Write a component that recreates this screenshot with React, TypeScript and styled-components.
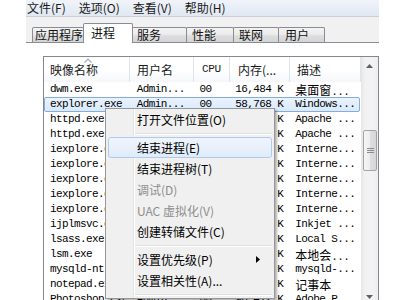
import React from "react";
import styled, { createGlobalStyle } from "styled-components";

const GlobalStyle = createGlobalStyle`
  html, body { margin: 0; padding: 0; width: 400px; height: 300px; overflow: hidden; background: #fff; }
  body { font-family: "Noto Sans CJK SC", "Noto Sans", sans-serif; }
`;

const Page = styled.div`
  position: relative;
  width: 400px;
  height: 300px;
  overflow: hidden;
  background: #fff;
`;

const Window = styled.div`
  margin-left: 26px;
  width: 353px;
  display: flex;
  flex-direction: column;
`;

const MenuBar = styled.div`
  height: 16px;
  display: flex;
  align-items: center;
  gap: 13px;
  padding-left: 1px;
  background: linear-gradient(#f0f4fa, #e1e8f2);
  border-bottom: 1px solid #c8cfda;
  font-size: 12px;
  line-height: 16px;
  color: #1a1a1a;
`;

const MenuItem = styled.span`
  white-space: nowrap;
`;

const TabStrip = styled.div`
  height: 25px;
  background: #f1f1f1;
  border-bottom: 1px solid #898c95;
  display: flex;
  align-items: flex-end;
  padding-left: 6px;
`;

const Tab = styled.div<{ $w: number; $pl: number; $active?: boolean }>`
  position: relative;
  z-index: ${(p) => (p.$active ? 2 : 1)};
  box-sizing: border-box;
  width: ${(p) => p.$w}px;
  height: ${(p) => (p.$active ? 20 : 15)}px;
  margin-left: -1px;
  margin-bottom: ${(p) => (p.$active ? -1 : 0)}px;
  &:first-child { margin-left: 0; }
  border: 1px solid #898c95;
  border-bottom: none;
  border-radius: 2px 2px 0 0;
  background: ${(p) =>
    p.$active ? "#fff" : "linear-gradient(#f3f3f3, #ececec 45%, #dedede 55%, #d4d4d4)"};
  padding-left: ${(p) => p.$pl}px;
  font-size: 12px;
  line-height: ${(p) => (p.$active ? 18 : 14)}px;
  color: #111;
  white-space: nowrap;
`;

const TabPage = styled.div`
  background: #fff;
  padding: 13px 0 0 17px;
`;

const ListBox = styled.div`
  width: 336px;
  height: 250px;
  box-sizing: border-box;
  border: 1px solid #828790;
  display: flex;
  background: #fff;
`;

const ListContent = styled.div`
  width: 317px;
  overflow: hidden;
  display: flex;
  flex-direction: column;
`;

const Header = styled.div`
  height: 25px;
  display: flex;
  background: linear-gradient(#ffffff, #ffffff 50%, #f5f7fa);
  flex-shrink: 0;
`;

const HeaderCell = styled.div<{ $w: number; $pl: number; $mono?: boolean }>`
  position: relative;
  box-sizing: border-box;
  width: ${(p) => p.$w}px;
  padding-left: ${(p) => p.$pl}px;
  border-right: 1px solid #dfe4eb;
  font-family: ${(p) =>
    p.$mono ? `"Liberation Mono", monospace` : `"Noto Sans CJK SC", sans-serif`};
  font-size: ${(p) => (p.$mono ? 11 : 12)}px;
  letter-spacing: ${(p) => (p.$mono ? "-0.4px" : "0")};
  line-height: 25px;
  color: #1b1b1b;
  white-space: nowrap;
  overflow: hidden;
`;

const SortArrow = styled.svg`
  position: absolute;
  top: 1px;
  left: 40px;
`;

const Row = styled.div<{ $selected?: boolean }>`
  box-sizing: border-box;
  height: 15px;
  width: 316px;
  display: flex;
  border: 1px solid ${(p) => (p.$selected ? "#84acdd" : "transparent")};
  border-radius: 2px;
  background: ${(p) => (p.$selected ? "linear-gradient(#eaf3fd, #d9e9fc)" : "transparent")};
  flex-shrink: 0;
`;

const Cell = styled.div<{ $w: number; $pl?: number; $pr?: number; $right?: boolean }>`
  box-sizing: border-box;
  width: ${(p) => p.$w}px;
  padding-left: ${(p) => p.$pl ?? 0}px;
  padding-right: ${(p) => p.$pr ?? 0}px;
  text-align: ${(p) => (p.$right ? "right" : "left")};
  font-family: "Liberation Mono", "DejaVu Sans Mono", monospace;
  font-size: 11px;
  letter-spacing: -0.6px;
  line-height: 13px;
  color: #000;
  white-space: pre;
  overflow: hidden;
`;

const Cjk = styled.span`
  font-family: "Noto Sans CJK SC", sans-serif;
  font-size: 12px;
  letter-spacing: 0;
`;

const ScrollBar = styled.div`
  width: 17px;
  display: flex;
  flex-direction: column;
  background: linear-gradient(to right, #e6e6e6, #f2f2f2 25%, #f2f2f2 75%, #ededed);
`;

const ScrollButton = styled.div`
  height: 17px;
  display: flex;
  align-items: center;
  justify-content: center;
  flex-shrink: 0;
`;

const Track = styled.div`
  flex: 1;
  padding-top: 56px;
`;

const Thumb = styled.div`
  box-sizing: border-box;
  height: 41px;
  margin: 0 1px 0 2px;
  border: 1px solid #a3a3a3;
  border-radius: 2px;
  background: linear-gradient(to right, #f6f6f6, #ececec 50%, #dedede 50%, #d6d6d6);
  display: flex;
  align-items: center;
  justify-content: center;
`;

const ContextMenu = styled.div`
  position: absolute;
  left: 105px;
  top: 108px;
  width: 170px;
  box-sizing: border-box;
  border: 1px solid #979797;
  background: #f0f0f0;
  box-shadow: 2px 2px 2px rgba(0, 0, 0, 0.3);
  padding: 0 2px;
  font-family: "Noto Sans CJK SC", sans-serif;
  font-size: 12px;
  z-index: 10;
  &::before {
    content: "";
    position: absolute;
    left: 27px;
    top: 0;
    bottom: 0;
    width: 1px;
    background: #e2e3e3;
    border-right: 1px solid #ffffff;
  }
`;

const CtxItem = styled.div<{ $hover?: boolean; $disabled?: boolean }>`
  position: relative;
  box-sizing: border-box;
  height: 21px;
  padding-left: 28px;
  border: 1px solid ${(p) => (p.$hover ? "#aecbee" : "transparent")};
  border-radius: 3px;
  background: ${(p) => (p.$hover ? "linear-gradient(#f0f5fc, #e0ebfa)" : "transparent")};
  line-height: 19px;
  color: ${(p) => (p.$disabled ? "#8d8d8d" : "#000")};
  white-space: nowrap;
  display: flex;
  align-items: center;
  justify-content: space-between;
`;

const SubArrow = styled.svg`
  margin-right: 11px;
`;

const CtxSep = styled.div`
  height: 7px;
  display: flex;
  align-items: center;
  padding-left: 25px;
  &::after {
    content: "";
    flex: 1;
    height: 1px;
    background: #e0e0e0;
    border-bottom: 1px solid #ffffff;
  }
`;

type Proc = { name: string; user: string; cpu: string; mem: string; desc: React.ReactNode };

const procs: Proc[] = [
  { name: "dwm.exe", user: "Admin...", cpu: "00", mem: "16,484 K", desc: <><Cjk>桌面窗</Cjk>...</> },
  { name: "explorer.exe", user: "Admin...", cpu: "00", mem: "58,768 K", desc: "Windows..." },
  { name: "httpd.exe", user: "Admin...", cpu: "00", mem: "9,112 K", desc: "Apache ..." },
  { name: "httpd.exe", user: "Admin...", cpu: "00", mem: "12,904 K", desc: "Apache ..." },
  { name: "iexplore.exe", user: "Admin...", cpu: "00", mem: "21,360 K", desc: "Interne..." },
  { name: "iexplore.exe", user: "Admin...", cpu: "00", mem: "33,020 K", desc: "Interne..." },
  { name: "iexplore.exe", user: "Admin...", cpu: "00", mem: "18,744 K", desc: "Interne..." },
  { name: "iexplore.exe", user: "Admin...", cpu: "00", mem: "27,516 K", desc: "Interne..." },
  { name: "iexplore.exe", user: "Admin...", cpu: "00", mem: "40,128 K", desc: "Interne..." },
  { name: "ijplmsvc.exe", user: "SYSTEM", cpu: "00", mem: "1,036 K", desc: "Inkjet ..." },
  { name: "lsass.exe", user: "SYSTEM", cpu: "00", mem: "3,872 K", desc: "Local S..." },
  { name: "lsm.exe", user: "SYSTEM", cpu: "00", mem: "1,540 K", desc: <><Cjk>本地会</Cjk>...</> },
  { name: "mysqld-nt.exe", user: "SYSTEM", cpu: "00", mem: "8,204 K", desc: "mysqld-..." },
  { name: "notepad.exe", user: "Admin...", cpu: "00", mem: "4,316 K", desc: <Cjk>记事本</Cjk> },
  { name: "Photoshop.exe", user: "Admin...", cpu: "00", mem: "96,412 K", desc: "Adobe P..." },
];

const cols = [86, 64, 36, 60, 71];

export default function App() {
  return (
    <Page>
      <GlobalStyle />
      <Window>
        <MenuBar>
          <MenuItem>文件(F)</MenuItem>
          <MenuItem>选项(O)</MenuItem>
          <MenuItem>查看(V)</MenuItem>
          <MenuItem>帮助(H)</MenuItem>
        </MenuBar>
        <TabStrip>
          <Tab $w={52} $pl={2}>应用程序</Tab>
          <Tab $w={50} $pl={7} $active>进程</Tab>
          <Tab $w={55} $pl={4}>服务</Tab>
          <Tab $w={48} $pl={5}>性能</Tab>
          <Tab $w={46} $pl={5}>联网</Tab>
          <Tab $w={47} $pl={6}>用户</Tab>
        </TabStrip>
        <TabPage>
          <ListBox>
            <ListContent>
              <Header>
                <HeaderCell $w={cols[0]} $pl={6}>
                  映像名称
                  <SortArrow width="8" height="5" viewBox="0 0 8 5">
                    <path d="M0.5 4.5 L4 1 L7.5 4.5" fill="none" stroke="#9fb0c6" strokeWidth="1.2" />
                  </SortArrow>
                </HeaderCell>
                <HeaderCell $w={cols[1]} $pl={7}>用户名</HeaderCell>
                <HeaderCell $w={cols[2]} $pl={8} $mono>CPU</HeaderCell>
                <HeaderCell $w={cols[3]} $pl={8}>内存(...</HeaderCell>
                <HeaderCell $w={cols[4]} $pl={7}>描述</HeaderCell>
              </Header>
              {procs.map((p, i) => (
                <Row key={i} $selected={i === 1}>
                  <Cell $w={cols[0] - 1} $pl={5}>{p.name}</Cell>
                  <Cell $w={cols[1]} $pl={7}>{p.user}</Cell>
                  <Cell $w={cols[2]} $pl={6}>{p.cpu}</Cell>
                  <Cell $w={cols[3]} $pr={6} $right>{p.mem}</Cell>
                  <Cell $w={cols[4] - 1} $pl={6}>{p.desc}</Cell>
                </Row>
              ))}
            </ListContent>
            <ScrollBar>
              <ScrollButton>
                <svg width="7" height="4" viewBox="0 0 7 4">
                  <path d="M0 4 L3.5 0 L7 4 Z" fill="#606060" />
                </svg>
              </ScrollButton>
              <Track>
                <Thumb>
                  <svg width="7" height="7" viewBox="0 0 7 7">
                    <path d="M0 1.5 H7 M0 3.5 H7 M0 5.5 H7" stroke="#8a8a8a" strokeWidth="1" />
                  </svg>
                </Thumb>
              </Track>
              <ScrollButton>
                <svg width="7" height="4" viewBox="0 0 7 4">
                  <path d="M0 0 L3.5 4 L7 0 Z" fill="#606060" />
                </svg>
              </ScrollButton>
            </ScrollBar>
          </ListBox>
        </TabPage>
      </Window>
      <ContextMenu>
        <CtxItem>打开文件位置(O)</CtxItem>
        <CtxSep />
        <CtxItem $hover>结束进程(E)</CtxItem>
        <CtxItem>结束进程树(T)</CtxItem>
        <CtxItem $disabled>调试(D)</CtxItem>
        <CtxItem $disabled>UAC 虚拟化(V)</CtxItem>
        <CtxItem>创建转储文件(C)</CtxItem>
        <CtxSep />
        <CtxItem>
          <span>设置优先级(P)</span>
          <SubArrow width="4" height="7" viewBox="0 0 4 7">
            <path d="M0 0 L4 3.5 L0 7 Z" fill="#000" />
          </SubArrow>
        </CtxItem>
        <CtxItem>设置相关性(A)...</CtxItem>
        <CtxSep />
      </ContextMenu>
    </Page>
  );
}
